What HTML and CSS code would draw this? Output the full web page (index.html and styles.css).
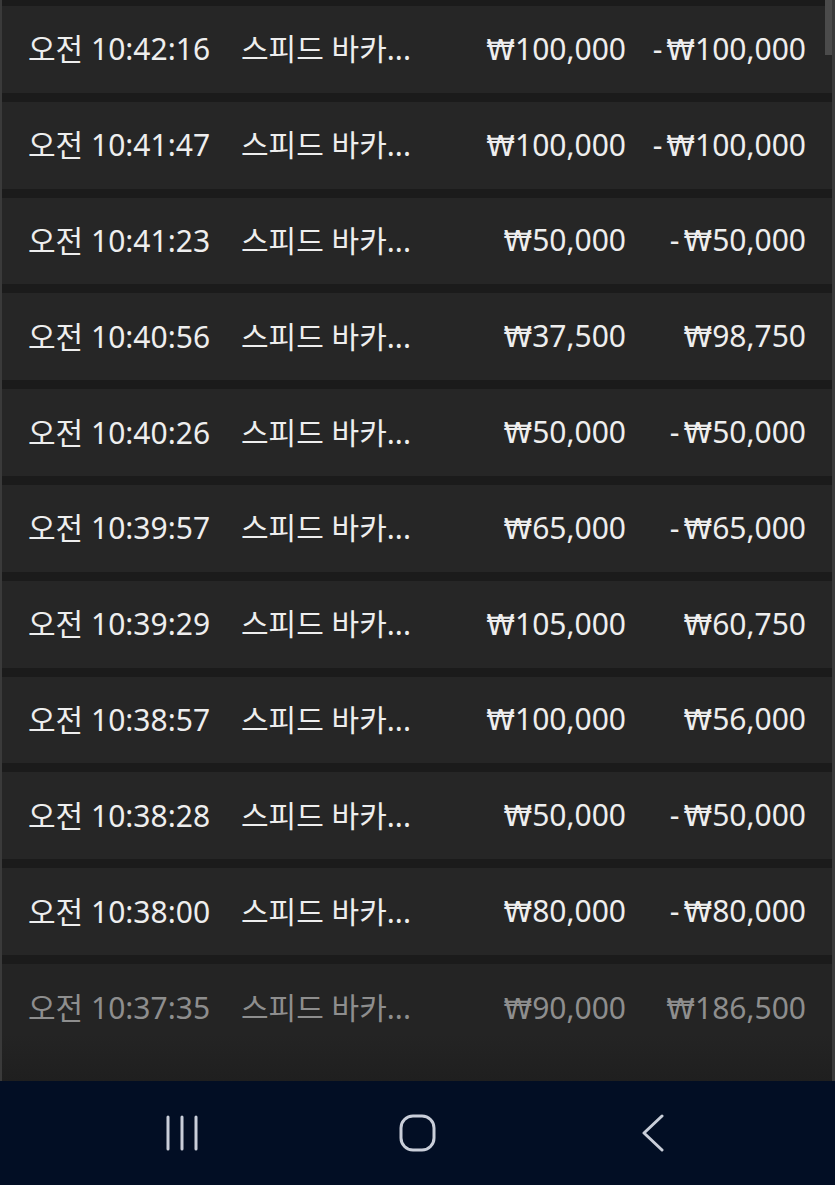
FILE: index.html
```html
<!DOCTYPE html>
<html lang="ko">
<head>
    <meta charset="UTF-8">
    <meta name="viewport" content="width=device-width, initial-scale=1.0">
    <title>베팅 내역</title>
    <link rel="stylesheet" href="styles.css">
</head>
<body>
    <div class="history">
        <div class="scroll-thumb"></div>
        <div class="row"><span class="time">오전 10:42:16</span><span class="game">스피드 바카...</span><span class="bet"><span class="won">₩</span>100,000</span><span class="result">-<span class="won">₩</span>100,000</span></div>
        <div class="row"><span class="time">오전 10:41:47</span><span class="game">스피드 바카...</span><span class="bet"><span class="won">₩</span>100,000</span><span class="result">-<span class="won">₩</span>100,000</span></div>
        <div class="row"><span class="time">오전 10:41:23</span><span class="game">스피드 바카...</span><span class="bet"><span class="won">₩</span>50,000</span><span class="result">-<span class="won">₩</span>50,000</span></div>
        <div class="row"><span class="time">오전 10:40:56</span><span class="game">스피드 바카...</span><span class="bet"><span class="won">₩</span>37,500</span><span class="result"><span class="won">₩</span>98,750</span></div>
        <div class="row"><span class="time">오전 10:40:26</span><span class="game">스피드 바카...</span><span class="bet"><span class="won">₩</span>50,000</span><span class="result">-<span class="won">₩</span>50,000</span></div>
        <div class="row"><span class="time">오전 10:39:57</span><span class="game">스피드 바카...</span><span class="bet"><span class="won">₩</span>65,000</span><span class="result">-<span class="won">₩</span>65,000</span></div>
        <div class="row"><span class="time">오전 10:39:29</span><span class="game">스피드 바카...</span><span class="bet"><span class="won">₩</span>105,000</span><span class="result"><span class="won">₩</span>60,750</span></div>
        <div class="row"><span class="time">오전 10:38:57</span><span class="game">스피드 바카...</span><span class="bet"><span class="won">₩</span>100,000</span><span class="result"><span class="won">₩</span>56,000</span></div>
        <div class="row"><span class="time">오전 10:38:28</span><span class="game">스피드 바카...</span><span class="bet"><span class="won">₩</span>50,000</span><span class="result">-<span class="won">₩</span>50,000</span></div>
        <div class="row"><span class="time">오전 10:38:00</span><span class="game">스피드 바카...</span><span class="bet"><span class="won">₩</span>80,000</span><span class="result">-<span class="won">₩</span>80,000</span></div>
        <div class="row faded"><span class="time">오전 10:37:35</span><span class="game">스피드 바카...</span><span class="bet"><span class="won">₩</span>90,000</span><span class="result"><span class="won">₩</span>186,500</span></div>
    </div>

    <nav class="navbar">
        <svg class="nav-icon" width="36" height="36" viewBox="0 0 36 36">
            <line x1="3" y1="2" x2="3" y2="34" />
            <line x1="17" y1="2" x2="17" y2="34" />
            <line x1="31" y1="2" x2="31" y2="34" />
        </svg>
        <svg class="nav-icon" width="38" height="38" viewBox="0 0 38 38">
            <rect x="2" y="2" width="33" height="34" rx="12" ry="12" />
        </svg>
        <svg class="nav-icon" width="26" height="38" viewBox="0 0 26 38">
            <polyline points="22,2 4,19 22,36" />
        </svg>
    </nav>
</body>
</html>
```

FILE: styles.css
```css
body {
    margin: 0;
    padding: 0;
    background-color: #1b1b1b;
    font-family: "Noto Sans", "Noto Sans CJK KR", sans-serif;
    color: #eeeeee;
}
.history {
    position: relative;
    height: 1075px;
    padding-top: 6px;
    overflow: hidden;
    border-left: 2px solid #3a3a3a;
    border-right: 3px solid #3a3a3a;
    background-color: #1b1b1b;
}
.scroll-thumb {
    position: absolute;
    top: 0;
    right: -3px;
    width: 10px;
    height: 55px;
    background-color: #4b4b4b;
}
.row {
    display: grid;
    grid-template-columns: 213px 1fr 160px 180px;
    align-items: center;
    height: 86.8px;
    margin-bottom: 9px;
    padding: 0 26px;
    background-color: #262626;
    font-size: 30px;
    line-height: 40px;
    white-space: nowrap;
}
.bet, .result {
    text-align: right;
}
.won {
    font-family: "DejaVu Sans", sans-serif;
    font-size: 29px;
    margin-left: 4px;
}
.row.faded {
    height: 117px;
    margin-bottom: 0;
    align-items: start;
    padding-top: 24px;
    box-sizing: border-box;
    color: #8e8e8e;
    background: linear-gradient(to bottom, #242424 0%, #242424 60%, #1f1f1f 100%);
}
.navbar {
    display: flex;
    align-items: center;
    height: 104px;
    background-color: #020e24;
}
.nav-icon {
    fill: none;
    stroke: #c9ced9;
    stroke-width: 3;
    stroke-linecap: round;
    stroke-linejoin: round;
}
.nav-icon:nth-child(1) {
    margin-left: 165px;
}
.nav-icon:nth-child(2) {
    margin-left: 198px;
}
.nav-icon:nth-child(3) {
    margin-left: 203px;
}
```
